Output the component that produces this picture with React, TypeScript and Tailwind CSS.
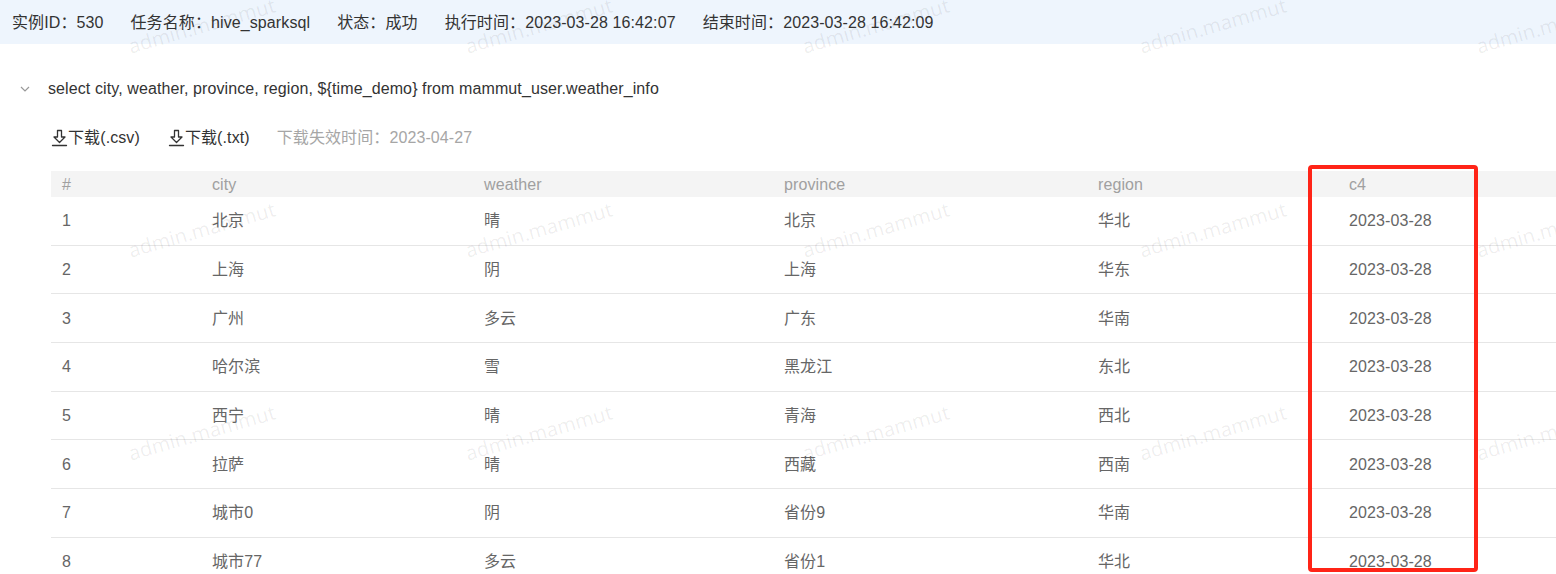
import React from "react";

const rows = [
  ["1", "北京", "晴", "北京", "华北", "2023-03-28"],
  ["2", "上海", "阴", "上海", "华东", "2023-03-28"],
  ["3", "广州", "多云", "广东", "华南", "2023-03-28"],
  ["4", "哈尔滨", "雪", "黑龙江", "东北", "2023-03-28"],
  ["5", "西宁", "晴", "青海", "西北", "2023-03-28"],
  ["6", "拉萨", "晴", "西藏", "西南", "2023-03-28"],
  ["7", "城市0", "阴", "省份9", "华南", "2023-03-28"],
  ["8", "城市77", "多云", "省份1", "华北", "2023-03-28"],
];

const headers = ["#", "city", "weather", "province", "region", "c4"];

const font = "font-['Liberation_Sans','Noto_Sans_CJK_SC',sans-serif]";

function DownloadIcon() {
  return (
    <svg width="17" height="18" viewBox="0 0 17 18" fill="none" stroke="#333" strokeWidth="1.3" strokeLinejoin="round">
      <path d="M6.5 1.5h4v6.5h3.5l-5.5 5.5-5.5-5.5h3.5z" />
      <path d="M1.5 16.5h14" strokeLinecap="round" />
    </svg>
  );
}

function Watermarks() {
  const xs = [202, 539, 876, 1213, 1550];
  const ys = [26, 230, 433];
  const items: { x: number; y: number }[] = [];
  ys.forEach((y) => xs.forEach((x) => items.push({ x, y })));
  return (
    <div className="pointer-events-none absolute inset-0 z-10 overflow-hidden">
      {items.map((p, i) => (
        <span
          key={i}
          className="absolute whitespace-nowrap font-['Open_Sans',sans-serif] text-[20px] leading-none text-[rgba(0,0,0,0.075)] -translate-x-1/2 -translate-y-1/2 -rotate-[16deg]"
          style={{ left: p.x, top: p.y }}
        >
          admin.mammut
        </span>
      ))}
    </div>
  );
}

export default function App() {
  return (
    <div className={`relative w-[1556px] h-[574px] overflow-hidden bg-white ${font} text-[16px] tracking-[0.1px]`}>
      <div className="flex h-[44px] items-center gap-[27px] bg-[#eef5fd] pl-[12px] pt-[2px] text-[#333]">
        <span>实例ID：530</span>
        <span>任务名称：hive_sparksql</span>
        <span>状态：成功</span>
        <span>执行时间：2023-03-28 16:42:07</span>
        <span>结束时间：2023-03-28 16:42:09</span>
      </div>

      <div className="mt-[29px] flex h-[32px] items-center text-[#333]">
        <div className="flex w-[48px] justify-center pl-[1px]">
          <svg width="10" height="6" viewBox="0 0 10 6" fill="none" stroke="#999" strokeWidth="1.2">
            <path d="M1 1l4 4 4-4" />
          </svg>
        </div>
        <span>select city, weather, province, region, ${"{"}time_demo{"}"} from mammut_user.weather_info</span>
      </div>

      <div className="mt-[18px] flex h-[30px] items-center pl-[51px]">
        <span className="flex items-center text-[#333]">
          <DownloadIcon />
          <span>下载(.csv)</span>
        </span>
        <span className="ml-[28px] flex items-center text-[#333]">
          <DownloadIcon />
          <span>下载(.txt)</span>
        </span>
        <span className="ml-[27px] text-[#a6a6a6]">下载失效时间：2023-04-27</span>
      </div>

      <div className="ml-[51px] mt-[18px]">
        <div className="grid h-[26px] grid-cols-[150px_272px_300px_314px_251px_1fr] items-center bg-[#f4f4f4] pt-[1px] text-[#a0a0a0]">
          {headers.map((h) => (
            <div key={h} className="pl-[11px]">{h}</div>
          ))}
        </div>
        {rows.map((r) => (
          <div
            key={r[0]}
            className="grid h-[48.7px] grid-cols-[150px_272px_300px_314px_251px_1fr] items-center border-b border-[#e6e6e6] pt-[1px] text-[#666]"
          >
            {r.map((c, i) => (
              <div key={i} className="pl-[11px]">{c}</div>
            ))}
          </div>
        ))}
      </div>

      <div className="pointer-events-none absolute left-[1308px] top-[165px] z-20 h-[407px] w-[170px] rounded-[4px] border-[4px] border-[#ff2417]" />

      <Watermarks />
    </div>
  );
}
